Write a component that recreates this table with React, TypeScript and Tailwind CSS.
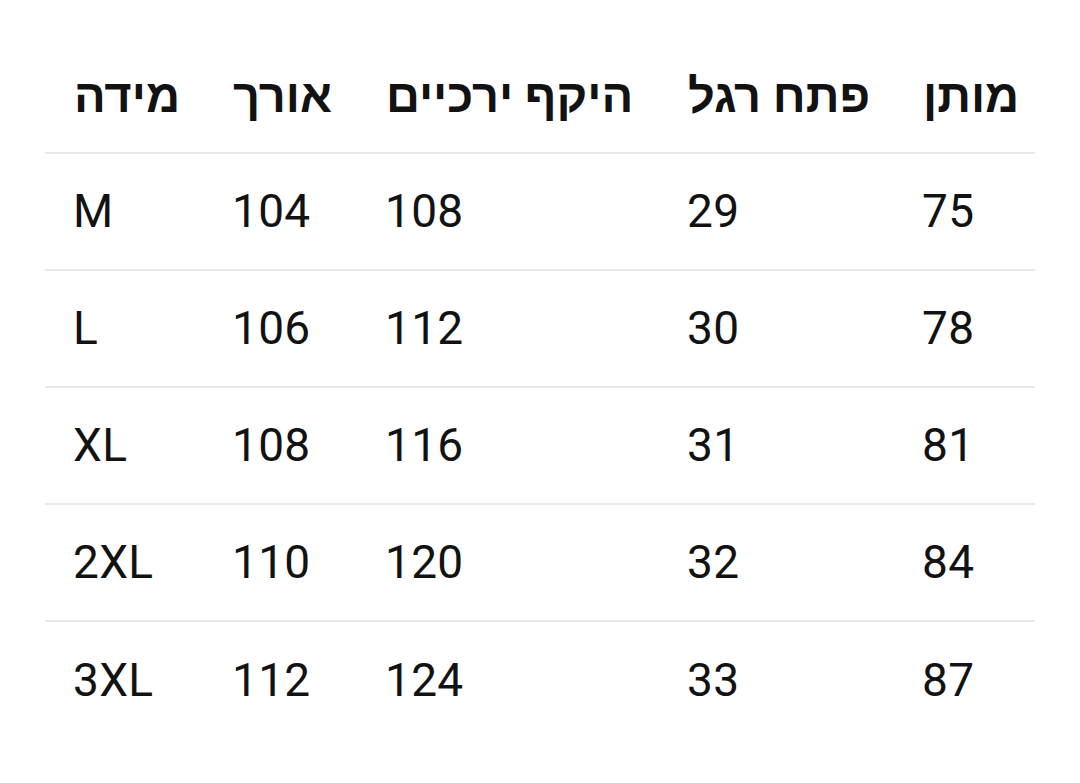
const headers = ["מידה", "אורך", "היקף ירכיים", "פתח רגל", "מותן"]

const rows = [
  ["M", "104", "108", "29", "75"],
  ["L", "106", "112", "30", "78"],
  ["XL", "108", "116", "31", "81"],
  ["2XL", "110", "120", "32", "84"],
  ["3XL", "112", "124", "33", "87"],
]

const grid = "grid grid-cols-[159px_153px_302px_235px_141px]"

export default function App() {
  return (
    <div
      className="min-h-[783px] w-[1080px] bg-white pt-[37px] text-[#121212]"
      style={{ fontFamily: "Roboto, 'Noto Sans', 'Liberation Sans', sans-serif" }}
    >
      <div className="ml-[45px] w-[990px]">
        <div className={`${grid} h-[117px] border-b-2 border-[#e9e9e9]`}>
          {headers.map((h) => (
            <div key={h} className="flex items-center pl-[29px] pt-[3px] text-[47px] font-bold">
              <span dir="rtl">{h}</span>
            </div>
          ))}
        </div>
        {rows.map((r, i) => (
          <div
            key={r[0]}
            className={`${grid} h-[117px] ${i < rows.length - 1 ? "border-b-2 border-[#e9e9e9]" : ""}`}
          >
            {r.map((c, j) => (
              <div key={j} className="flex items-center pl-[28px] text-[46px] tracking-[0.3px]">
                {c}
              </div>
            ))}
          </div>
        ))}
      </div>
    </div>
  )
}
